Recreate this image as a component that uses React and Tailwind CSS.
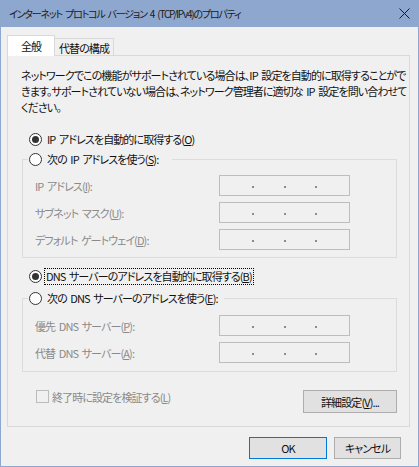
import React from "react";

const FONT = "font-['Noto_Sans_CJK_JP','Noto_Sans',sans-serif] [font-feature-settings:'palt'] text-[11px] tracking-[-0.9px] [word-spacing:2px]";

function Radio({ checked }) {
  return (
    <span className="w-[13px] h-[13px] rounded-full border border-[#333333] bg-white flex items-center justify-center shrink-0">
      {checked && <span className="w-[7px] h-[7px] rounded-full bg-[#333333]" />}
    </span>
  );
}

function IpBox() {
  return (
    <div className="w-[131px] h-[21px] border border-[#bdbdbd] bg-[#f0f0f0] flex items-center pt-[2px]">
      <span className="ml-[32px] w-[2px] h-[2px] bg-[#8c8c8c]" />
      <span className="ml-[30px] w-[2px] h-[2px] bg-[#8c8c8c]" />
      <span className="ml-[29px] w-[2px] h-[2px] bg-[#8c8c8c]" />
    </div>
  );
}

function Row({ children }) {
  return (
    <div className="flex items-center h-[21px]">
      <div className="w-[184px] text-[#8a8a8a] whitespace-nowrap leading-[16px]">{children}</div>
      <IpBox />
    </div>
  );
}

export default function App() {
  return (
    <div className={`w-[419px] h-[467px] bg-[#8ea7cf] flex flex-col px-px pb-px text-[#111111] ${FONT}`}>
      {/* Title bar */}
      <div className="h-[27px] flex items-center justify-between pl-[8px] pr-[7px] shrink-0">
        <span className="whitespace-nowrap leading-[16px] text-[10px] tracking-[-1.2px] [word-spacing:2px] text-[#1a1a1a]">
          インターネット プロトコル バージョン 4 (TCP/IPv4)のプロパティ
        </span>
        <svg width="11" height="11" viewBox="0 0 11 11" className="mr-[1px]">
          <path d="M0.5 0.5 L10.5 10.5 M10.5 0.5 L0.5 10.5" stroke="#1a1a1a" strokeWidth="1" fill="none" />
        </svg>
      </div>

      {/* Body */}
      <div className="flex-1 bg-[#f0f0f0] flex flex-col pl-[6px] pt-[8px]">
        {/* Tabs */}
        <div className="flex items-end h-[20px]">
          <div className="relative z-10 -mb-px w-[48px] h-[21px] border border-b-0 border-[#d9d9d9] bg-white flex items-center justify-center leading-[16px] whitespace-nowrap">
            全般
          </div>
          <div className="w-[59px] h-[17px] border-t border-r border-[#d9d9d9] bg-[#f0f0f0] flex items-center justify-center leading-[16px] pt-[2px] whitespace-nowrap">
            代替の構成
          </div>
        </div>

        {/* Panel */}
        <div className="w-[403px] h-[372px] border border-[#d9d9d9] flex flex-col">
          <p className="mt-[11px] ml-[13px] leading-[16px] whitespace-nowrap">
            ネットワークでこの機能がサポートされている場合は、IP 設定を自動的に取得することがで
            <br />
            きます。サポートされていない場合は、ネットワーク管理者に適切な IP 設定を問い合わせて
            <br />
            ください。
          </p>

          <div className="mt-[16px] ml-[21px] h-[16px] flex items-center">
            <Radio checked />
            <span className="ml-[5px] whitespace-nowrap leading-[16px]">
              IP アドレスを自動的に取得する(<u>O</u>)
            </span>
          </div>

          {/* Group 1 */}
          <div className="mt-[12px] ml-[14px] w-[375px] border border-[#dcdcdc] relative flex flex-col gap-[6px] pt-[15px] pb-[7px] pl-[12px]">
            <div className="absolute left-[5px] top-[-9px] h-[16px] w-[144px] bg-[#f0f0f0] flex items-center pl-px">
              <Radio />
              <span className="ml-[5px] whitespace-nowrap leading-[16px]">
                次の IP アドレスを使う(<u>S</u>):
              </span>
            </div>
            <Row>IP アドレス(<u>I</u>):</Row>
            <Row>サブネット マスク(<u>U</u>):</Row>
            <Row>デフォルト ゲートウェイ(<u>D</u>):</Row>
          </div>

          <div className="mt-[10px] ml-[21px] h-[17px] flex items-center">
            <Radio checked />
            <span className="ml-[2px] px-[1px] whitespace-nowrap leading-[15px] border border-dotted border-black">
              DNS サーバーのアドレスを自動的に取得する(<u>B</u>)
            </span>
          </div>

          {/* Group 2 */}
          <div className="mt-[13px] ml-[14px] w-[375px] border border-[#dcdcdc] relative flex flex-col gap-[6px] pt-[16px] pb-[8px] pl-[12px]">
            <div className="absolute left-[5px] top-[-9px] h-[16px] bg-[#f0f0f0] flex items-center pl-px pr-[6px]">
              <Radio />
              <span className="ml-[5px] whitespace-nowrap leading-[16px]">
                次の DNS サーバーのアドレスを使う(<u>E</u>):
              </span>
            </div>
            <Row>優先 DNS サーバー(<u>P</u>):</Row>
            <Row>代替 DNS サーバー(<u>A</u>):</Row>
          </div>

          {/* Bottom row */}
          <div className="mt-[18px] flex items-start">
            <div className="ml-[28px] h-[13px] flex items-center">
              <span className="w-[13px] h-[13px] border border-[#bcbcbc] bg-[#f0f0f0] shrink-0" />
              <span className="ml-[3px] text-[#8a8a8a] whitespace-nowrap leading-[16px]">
                終了時に設定を検証する(<u>L</u>)
              </span>
            </div>
            <div className="ml-auto mr-[12px] w-[94px] h-[23px] border border-[#adadad] bg-[#e1e1e1] flex items-center justify-center leading-[16px] whitespace-nowrap">
              詳細設定(<u>V</u>)...
            </div>
          </div>
        </div>

        {/* Dialog buttons */}
        <div className="mt-[10px] flex justify-end pr-[17px] gap-[7px]">
          <div className="w-[78px] h-[22px] border border-[#0078d7] bg-[#e1e1e1] flex items-center justify-center leading-[16px]">
            OK
          </div>
          <div className="w-[67px] h-[22px] border border-[#adadad] bg-[#e1e1e1] flex items-center justify-center leading-[16px] whitespace-nowrap">
            キャンセル
          </div>
        </div>
      </div>
    </div>
  );
}
